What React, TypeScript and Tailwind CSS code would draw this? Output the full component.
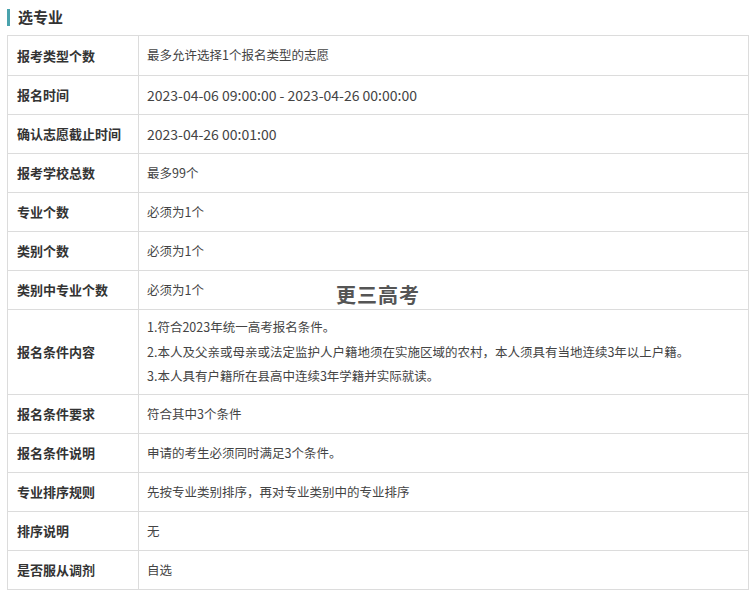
import React from 'react';

const rows: { label: string; value: React.ReactNode; big?: boolean; tall?: boolean }[] = [
  { label: '报考类型个数', value: '最多允许选择1个报名类型的志愿' },
  { label: '报名时间', value: '2023-04-06 09:00:00 - 2023-04-26 00:00:00', big: true },
  { label: '确认志愿截止时间', value: '2023-04-26 00:01:00', big: true },
  { label: '报考学校总数', value: '最多99个' },
  { label: '专业个数', value: '必须为1个' },
  { label: '类别个数', value: '必须为1个' },
  { label: '类别中专业个数', value: '必须为1个' },
  {
    label: '报名条件内容',
    tall: true,
    value: (
      <div className="flex flex-col gap-[6px]">
        <div>1.符合2023年统一高考报名条件。</div>
        <div>2.本人及父亲或母亲或法定监护人户籍地须在实施区域的农村，本人须具有当地连续3年以上户籍。</div>
        <div>3.本人具有户籍所在县高中连续3年学籍并实际就读。</div>
      </div>
    ),
  },
  { label: '报名条件要求', value: '符合其中3个条件' },
  { label: '报名条件说明', value: '申请的考生必须同时满足3个条件。' },
  { label: '专业排序规则', value: '先按专业类别排序，再对专业类别中的专业排序' },
  { label: '排序说明', value: '无' },
  { label: '是否服从调剂', value: '自选' },
];

export default function App() {
  return (
    <div
      className="relative w-[756px] h-[591px] bg-white text-[#333]"
      style={{ fontFamily: '"Noto Sans CJK SC", "Noto Sans", sans-serif' }}
    >
      <div className="flex items-center h-[35px] pl-[7px]">
        <div className="w-[3px] h-[17px] bg-[#4aa3ad]" />
        <div className="ml-[8px] text-[15px] font-bold text-[#333]">选专业</div>
      </div>
      <div className="mx-[7px] border border-[#dcdcdc]">
        {rows.map((r, i) => (
          <div
            key={i}
            className={`flex ${i > 0 ? 'border-t border-[#dcdcdc]' : ''} ${r.tall ? 'h-[85px]' : 'h-[39px]'}`}
          >
            <div className="w-[131px] shrink-0 flex items-center pl-[9px] text-[13px] font-bold text-[#333] border-r border-[#dcdcdc]">
              {r.label}
            </div>
            <div className={`flex items-center pl-[8px] text-[#444] ${r.big ? 'text-[14px]' : 'text-[12.5px]'}`}>
              {r.value}
            </div>
          </div>
        ))}
      </div>
      <div className="absolute left-[336px] top-[280px] text-[20px] font-bold text-[#555] tracking-[1px]">更三高考</div>
    </div>
  );
}
